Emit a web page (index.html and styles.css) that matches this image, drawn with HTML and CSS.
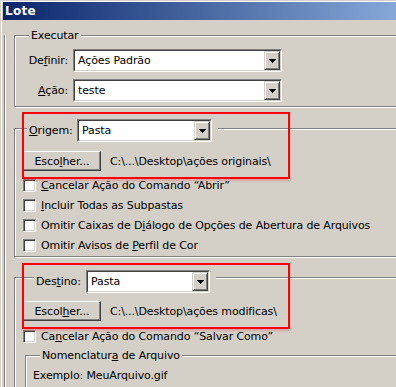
FILE: index.html
```html
<!DOCTYPE html>
<html lang="pt">
<head>
  <title>Lote</title>
  <link rel="stylesheet" href="styles.css">
</head>
<body>
<div class="window">
  <div class="titlebar">Lote</div>

  <div class="frame">
    <div class="group group-exec">
      <div class="legend legend-exec">Executar</div>
      <div class="field-row">
        <span class="field-label">De<u>f</u>inir:</span>
        <div class="select select-wide"><div class="select-inner">
          <span class="select-text">Ações Padrão</span>
          <span class="drop"><svg width="7" height="4" viewBox="0 0 7 4"><path d="M0 0h7v1h-1v1h-1v1h-1v1h-1v-1h-1v-1h-1v-1h-1z"/></svg></span>
        </div></div>
      </div>
      <div class="field-row">
        <span class="field-label"><u>A</u>ção:</span>
        <div class="select select-wide"><div class="select-inner">
          <span class="select-text">teste</span>
          <span class="drop"><svg width="7" height="4" viewBox="0 0 7 4"><path d="M0 0h7v1h-1v1h-1v1h-1v1h-1v-1h-1v-1h-1v-1h-1z"/></svg></span>
        </div></div>
      </div>
    </div>

    <div class="group group-source">
      <div class="legend legend-source">
        <span class="legend-label label-source"><u>O</u>rigem:</span>
        <div class="select select-source"><div class="select-inner">
          <span class="select-text">Pasta</span>
          <span class="drop"><svg width="7" height="4" viewBox="0 0 7 4"><path d="M0 0h7v1h-1v1h-1v1h-1v1h-1v-1h-1v-1h-1v-1h-1z"/></svg></span>
        </div></div>
      </div>
      <div class="choose-row">
        <button class="btn">Esco<u>l</u>her...</button>
        <span class="path">C:\...\Desktop\ações originais\</span>
      </div>
      <div class="check-row first"><span class="check"></span><span><u>C</u>ancelar Ação do Comando “Abrir”</span></div>
      <div class="check-row"><span class="check"></span><span><u>I</u>ncluir Todas as Subpastas</span></div>
      <div class="check-row"><span class="check"></span><span>Omitir Caixas de D<u>i</u>álogo de Opções de Abertura de Arquivos</span></div>
      <div class="check-row"><span class="check"></span><span>Omitir Avisos de <u>P</u>erfil de Cor</span></div>
    </div>

    <div class="group group-dest">
      <div class="legend legend-dest">
        <span class="legend-label label-dest">Des<u>t</u>ino:</span>
        <div class="select select-dest"><div class="select-inner">
          <span class="select-text">Pasta</span>
          <span class="drop"><svg width="7" height="4" viewBox="0 0 7 4"><path d="M0 0h7v1h-1v1h-1v1h-1v1h-1v-1h-1v-1h-1v-1h-1z"/></svg></span>
        </div></div>
      </div>
      <div class="choose-row">
        <button class="btn">Escol<u>h</u>er...</button>
        <span class="path">C:\...\Desktop\ações modificas\</span>
      </div>
      <div class="check-row first"><span class="check"></span><span>Ca<u>n</u>celar Ação do Comando “Salvar Como”</span></div>

      <div class="group group-naming">
        <div class="legend legend-naming">Nomenclatur<u>a</u> de Arquivo</div>
        <div class="example">Exemplo: MeuArquivo.gif</div>
      </div>
    </div>
  </div>

  <div class="mark mark-source"></div>
  <div class="mark mark-dest"></div>
</div>
</body>
</html>
```

FILE: styles.css
```css
body {
  margin: 0;
  background-color: #d4d0c8;
  color: #000;
  font-family: "DejaVu Sans", sans-serif;
  font-size: 11px;
  letter-spacing: -0.12px;
  overflow: hidden;
}
u {
  text-decoration: underline;
  text-underline-offset: 1px;
}

.window {
  position: relative;
  width: 396px;
  height: 387px;
  box-sizing: border-box;
  border-top: 1px solid #d4d0c8;
  border-left: 1px solid #d4d0c8;
  box-shadow: inset 1px 1px #fff;
  padding: 1px 0 0 2px;
  overflow: hidden;
}
.titlebar {
  height: 18px;
  line-height: 18px;
  padding-left: 2px;
  background: linear-gradient(to right, #0a246a, #86a8d8);
  color: #fff;
  font-size: 12px;
  font-weight: bold;
  letter-spacing: 0.3px;
}

.frame {
  margin-left: 1px;
  height: 400px;
  border-left: 1px solid #808080;
  box-shadow: inset 1px 0 #fff;
  padding-left: 9px;
}

/* etched group boxes */
.group {
  border: 1px solid #808080;
  box-shadow: inset 1px 1px #fff, 1px 1px #fff;
  margin-right: -40px;
}
.legend {
  width: fit-content;
  background-color: #d4d0c8;
  padding: 0 2px;
}
.legend-exec,
.legend-naming {
  height: 13px;
  line-height: 13px;
  margin: -7px 0 0 14px;
}
.legend-source,
.legend-dest {
  display: flex;
  align-items: center;
  height: 23px;
  padding-right: 6px;
}

.group-exec {
  margin-top: 15px;
  padding-bottom: 4px;
}
.field-row {
  display: flex;
  align-items: center;
  gap: 5px;
  margin-top: 7px;
}
.field-label {
  width: 53px;
  text-align: right;
}

.group-source {
  margin-top: 21px;
  padding-bottom: 4px;
}
.legend-source {
  margin: -10px 0 0 12px;
}
.label-source {
  width: 48px;
}
.group-dest {
  margin-top: 20px;
  padding-bottom: 20px;
}
.legend-dest {
  margin: -8px 0 0 19px;
}
.label-dest {
  width: 50px;
}

/* combo boxes */
.select {
  height: 23px;
  box-sizing: border-box;
  border: 1px solid;
  border-color: #808080 #fff #fff #808080;
}
.select-inner {
  display: flex;
  height: 100%;
  box-sizing: border-box;
  border: 1px solid;
  border-color: #404040 #d4d0c8 #d4d0c8 #404040;
  background-color: #fff;
}
.select-text {
  flex: 1;
  padding-left: 3px;
  line-height: 19px;
}
.drop {
  display: flex;
  align-items: center;
  justify-content: center;
  width: 16px;
  box-sizing: border-box;
  border: 1px solid;
  border-color: #d4d0c8 #404040 #404040 #d4d0c8;
  box-shadow: inset 1px 1px #fff, inset -1px -1px #808080;
  background-color: #d4d0c8;
}
.select-wide { width: 209px; }
.select-source { width: 135px; }
.select-dest { width: 124px; }

/* buttons and checkboxes */
.choose-row {
  display: flex;
  align-items: center;
  gap: 9px;
  margin: 9px 0 0 8px;
}
.group-dest .choose-row {
  margin-top: 8px;
}
.btn {
  width: 78px;
  height: 20px;
  box-sizing: border-box;
  padding: 0;
  border: 1px solid;
  border-color: #fff #404040 #404040 #fff;
  box-shadow: inset -1px -1px #808080;
  background-color: #d4d0c8;
  color: #000;
  font: inherit;
  letter-spacing: inherit;
}
.check-row {
  display: flex;
  align-items: center;
  gap: 5px;
  height: 13px;
  margin: 7px 0 0 8px;
}
.check-row.first {
  margin-top: 8px;
}
.group-dest .check-row.first {
  margin-top: 9px;
}
.check {
  width: 13px;
  height: 13px;
  box-sizing: border-box;
  border: 1px solid;
  border-color: #808080 #fff #fff #808080;
  box-shadow: inset 1px 1px #404040, inset -1px -1px #d4d0c8;
  background-color: #fff;
}

.group-naming {
  margin: 12px 0 0 10px;
  height: 60px;
}
.example {
  margin: 7px 0 0 7px;
  line-height: 13px;
}

/* red highlight boxes drawn over the dialog */
.mark {
  position: absolute;
  left: 21px;
  width: 268px;
  box-sizing: border-box;
  border: 2px solid #f00;
  box-shadow: 0 2px 2px rgba(220, 90, 90, 0.35);
}
.mark-source {
  top: 111px;
  height: 67px;
}
.mark-dest {
  top: 262px;
  height: 66px;
}
```
